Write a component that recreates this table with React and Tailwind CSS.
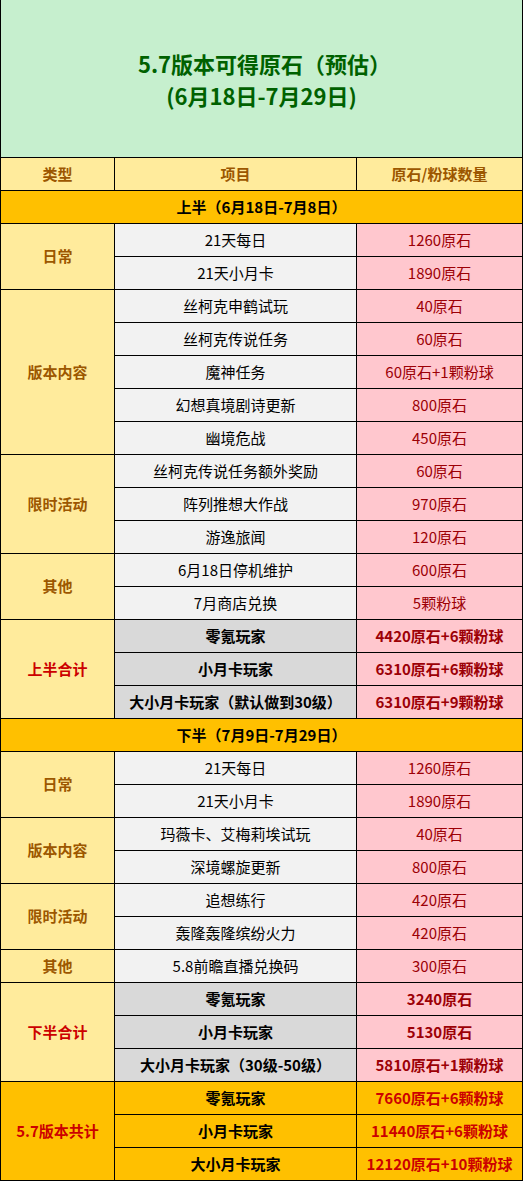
const font = { fontFamily: '"Noto Sans CJK SC", "Noto Sans", sans-serif' }

// kind: n = normal row, t = total row, g = grand total row
const sections = [
  {
    title: '上半（6月18日-7月8日）',
    groups: [
      { label: '日常', rows: [['21天每日', '1260原石'], ['21天小月卡', '1890原石']] },
      {
        label: '版本内容',
        rows: [
          ['丝柯克申鹤试玩', '40原石'],
          ['丝柯克传说任务', '60原石'],
          ['魔神任务', '60原石+1颗粉球'],
          ['幻想真境剧诗更新', '800原石'],
          ['幽境危战', '450原石'],
        ],
      },
      {
        label: '限时活动',
        rows: [
          ['丝柯克传说任务额外奖励', '60原石'],
          ['阵列推想大作战', '970原石'],
          ['游逸旅闻', '120原石'],
        ],
      },
      { label: '其他', rows: [['6月18日停机维护', '600原石'], ['7月商店兑换', '5颗粉球']] },
      {
        label: '上半合计',
        kind: 't',
        rows: [
          ['零氪玩家', '4420原石+6颗粉球'],
          ['小月卡玩家', '6310原石+6颗粉球'],
          ['大小月卡玩家（默认做到30级）', '6310原石+9颗粉球'],
        ],
      },
    ],
  },
  {
    title: '下半（7月9日-7月29日）',
    groups: [
      { label: '日常', rows: [['21天每日', '1260原石'], ['21天小月卡', '1890原石']] },
      { label: '版本内容', rows: [['玛薇卡、艾梅莉埃试玩', '40原石'], ['深境螺旋更新', '800原石']] },
      { label: '限时活动', rows: [['追想练行', '420原石'], ['轰隆轰隆缤纷火力', '420原石']] },
      { label: '其他', rows: [['5.8前瞻直播兑换码', '300原石']] },
      {
        label: '下半合计',
        kind: 't',
        rows: [
          ['零氪玩家', '3240原石'],
          ['小月卡玩家', '5130原石'],
          ['大小月卡玩家（30级-50级）', '5810原石+1颗粉球'],
        ],
      },
      {
        label: '5.7版本共计',
        kind: 'g',
        rows: [
          ['零氪玩家', '7660原石+6颗粉球'],
          ['小月卡玩家', '11440原石+6颗粉球'],
          ['大小月卡玩家', '12120原石+10颗粉球'],
        ],
      },
    ],
  },
]

const spans = { 1: 'row-span-1', 2: 'row-span-2', 3: 'row-span-3', 5: 'row-span-5' }

const labelStyle = {
  n: 'bg-[#ffeb9c] text-[#9c5700]',
  t: 'bg-[#ffeb9c] text-[#cc0000]',
  g: 'bg-[#ffc000] text-[#cc0000]',
}
const itemStyle = {
  n: 'bg-[#f2f2f2] text-black',
  t: 'bg-[#d9d9d9] text-black font-bold',
  g: 'bg-[#ffc000] text-black font-bold',
}
const valueStyle = {
  n: 'bg-[#ffc7ce] text-[#9c0006]',
  t: 'bg-[#ffc7ce] text-[#9c0006] font-bold',
  g: 'bg-[#ffc000] text-[#cc0000] font-bold',
}

function Cell({ className, children }) {
  return <div className={`flex h-[32px] items-center justify-center text-[15px] ${className}`}>{children}</div>
}

export default function App() {
  return (
    <div className="w-[523px] bg-black px-px pb-px" style={font}>
      <div className="grid grid-cols-[113px_241px_165px] gap-px">
        <div className="col-span-3 flex h-[157px] flex-col items-center justify-center bg-[#c6efce] text-[22px] font-bold leading-[32px] text-[#006100]">
          <div className="pl-[6px]">5.7版本可得原石（预估）</div>
          <div>(6月18日-7月29日)</div>
        </div>

        <Cell className="bg-[#ffeb9c] font-bold text-[#9c5700]">类型</Cell>
        <Cell className="bg-[#ffeb9c] font-bold text-[#9c5700]">项目</Cell>
        <Cell className="bg-[#ffeb9c] font-bold text-[#9c5700]">原石/粉球数量</Cell>

        {sections.map((s) => (
          <div key={s.title} className="contents">
            <Cell className="col-span-3 bg-[#ffc000] font-bold text-black">{s.title}</Cell>
            {s.groups.map((g) => {
              const k = g.kind || 'n'
              return (
                <div key={g.label} className="contents">
                  <div
                    className={`flex items-center justify-center text-[15px] font-bold ${spans[g.rows.length]} ${labelStyle[k]}`}
                  >
                    {g.label}
                  </div>
                  {g.rows.map(([item, value]) => (
                    <div key={item} className="contents">
                      <Cell className={itemStyle[k]}>{item}</Cell>
                      <Cell className={valueStyle[k]}>{value}</Cell>
                    </div>
                  ))}
                </div>
              )
            })}
          </div>
        ))}
      </div>
    </div>
  )
}
